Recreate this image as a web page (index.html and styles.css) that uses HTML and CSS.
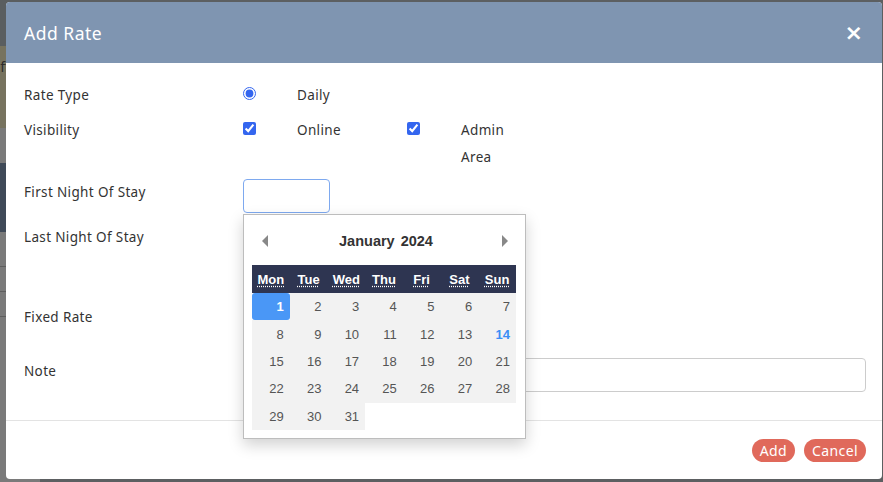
FILE: index.html
```html
<!DOCTYPE html>
<html lang="en">
<head>
    <meta charset="UTF-8">
    <meta name="viewport" content="width=device-width, initial-scale=1.0">
    <title>Add Rate</title>
    <link rel="stylesheet" href="styles.css">
</head>
<body>
    <!-- page behind the modal -->
    <div class="page">
        <div class="band band-top"></div>
        <div class="band band-olive"><span>ff</span></div>
        <div class="band band-grey"></div>
        <div class="band band-blue"></div>
        <div class="band band-rows">
            <div class="line"></div>
            <div class="line"></div>
            <div class="line"></div>
        </div>
    </div>

    <div class="modal">
        <div class="modal-header">
            <h4>Add Rate</h4>
            <button class="close" type="button">&times;</button>
        </div>

        <div class="modal-body">
            <div class="form-row row-type">
                <label class="label">Rate Type</label>
                <div class="options">
                    <div class="option">
                        <input type="radio" name="rate-type" checked>
                        <span>Daily</span>
                    </div>
                </div>
            </div>

            <div class="form-row row-visibility">
                <label class="label">Visibility</label>
                <div class="options">
                    <div class="option">
                        <input type="checkbox" checked>
                        <span>Online</span>
                    </div>
                    <div class="option">
                        <input type="checkbox" checked>
                        <span class="narrow">Admin Area</span>
                    </div>
                </div>
            </div>

            <div class="form-row row-first">
                <label class="label">First Night Of Stay</label>
                <input type="text" class="date-input focused">
            </div>

            <div class="form-row row-last">
                <label class="label">Last Night Of Stay</label>
                <input type="text" class="date-input">
            </div>

            <div class="form-row row-fixed">
                <label class="label">Fixed Rate</label>
                <input type="text" class="date-input">
            </div>

            <div class="form-row row-note">
                <label class="label">Note</label>
                <input type="text" class="note-input">
            </div>

            <div class="datepicker">
                <div class="dp-head">
                    <span class="arrow arrow-left"></span>
                    <div class="dp-title"><span>January</span><span>2024</span></div>
                    <span class="arrow arrow-right"></span>
                </div>
                <table class="dp-table">
                    <thead>
                        <tr>
                            <th><abbr title="Monday">Mon</abbr></th>
                            <th><abbr title="Tuesday">Tue</abbr></th>
                            <th><abbr title="Wednesday">Wed</abbr></th>
                            <th><abbr title="Thursday">Thu</abbr></th>
                            <th><abbr title="Friday">Fri</abbr></th>
                            <th><abbr title="Saturday">Sat</abbr></th>
                            <th><abbr title="Sunday">Sun</abbr></th>
                        </tr>
                    </thead>
                    <tbody>
                        <tr><td class="selected">1</td><td>2</td><td>3</td><td>4</td><td>5</td><td>6</td><td>7</td></tr>
                        <tr><td>8</td><td>9</td><td>10</td><td>11</td><td>12</td><td>13</td><td class="today">14</td></tr>
                        <tr><td>15</td><td>16</td><td>17</td><td>18</td><td>19</td><td>20</td><td>21</td></tr>
                        <tr><td>22</td><td>23</td><td>24</td><td>25</td><td>26</td><td>27</td><td>28</td></tr>
                        <tr><td>29</td><td>30</td><td>31</td><td class="empty"></td><td class="empty"></td><td class="empty"></td><td class="empty"></td></tr>
                    </tbody>
                </table>
            </div>
        </div>

        <div class="modal-footer">
            <button class="btn" type="button">Add</button>
            <button class="btn" type="button">Cancel</button>
        </div>
    </div>
</body>
</html>
```

FILE: styles.css
```css
body {
    margin: 0;
    background-color: #5c5f61;
    font-family: "Noto Sans", "Open Sans", sans-serif;
    color: #333;
    overflow: hidden;
    height: 482px;
}
.page {
    width: 40px;
    display: flex;
    flex-direction: column;
}
.band {
    width: 100%;
}
.band-top {
    height: 46px;
    background-color: #5a5e60;
}
.band-olive {
    height: 82px;
    background-color: #77735f;
    color: #2c2c2c;
    font-size: 14px;
    line-height: 26px;
    padding-top: 8px;
    box-sizing: border-box;
    text-align: right;
    padding-right: 30px;
}
.band-grey {
    height: 35px;
    background-color: #7a7a7a;
}
.band-blue {
    height: 69px;
    background-color: #3f4a58;
}
.band-rows {
    height: 250px;
    background-color: #7a7a7a;
    padding-top: 34px;
    box-sizing: border-box;
}
.line {
    height: 1px;
    background-color: #5e5e5e;
    margin-bottom: 24px;
}

.modal {
    position: absolute;
    top: 2px;
    left: 6px;
    width: 876px;
    height: 477px;
    background-color: white;
    border-radius: 4px;
    overflow: hidden;
    display: flex;
    flex-direction: column;
}
.modal-header {
    height: 61px;
    background-color: #7f95b1;
    display: flex;
    align-items: center;
    justify-content: space-between;
    padding: 0 18px;
    flex-shrink: 0;
}
.modal-header h4 {
    margin: 0;
    color: white;
    font-size: 17.5px;
    font-weight: 400;
    letter-spacing: 0.5px;
}
.close {
    border: none;
    background: none;
    color: white;
    font-size: 22px;
    font-weight: 700;
    padding: 0;
    line-height: 1;
    margin-right: 1px;
    font-family: "DejaVu Sans", sans-serif;
}

.modal-body {
    position: relative;
    padding: 19px 16px 28px 18px;
    border-bottom: 1px solid #e3e3e3;
    font-size: 13.5px;
    letter-spacing: 0.35px;
}
.form-row {
    display: flex;
    align-items: flex-start;
}
.label {
    width: 219px;
    line-height: 26px;
    flex-shrink: 0;
}
.options {
    display: flex;
}
.option {
    display: flex;
    align-items: flex-start;
    width: 164px;
}
.option input {
    margin: 5px 41px 0 0;
    width: 13px;
    height: 13px;
    accent-color: #3466ef;
}
.option span {
    line-height: 27px;
}
.narrow {
    width: 50px;
}
.row-type {
    margin-bottom: 9px;
}
.row-type .option span {
    line-height: 26px;
}
.row-visibility {
    margin-bottom: 8px;
}
.row-visibility .label {
    line-height: 27px;
}
.date-input {
    width: 87px;
    height: 34px;
    box-sizing: border-box;
    border: 1px solid #ccc;
    border-radius: 4px;
    margin: 0;
    font: inherit;
}
.focused {
    border-color: #7ea9ef;
    outline: none;
}
.row-first {
    margin-bottom: 11px;
}
.row-last {
    margin-bottom: 46px;
}
.row-fixed {
    margin-bottom: 20px;
}
.note-input {
    flex: 1;
    height: 34px;
    box-sizing: border-box;
    border: 1px solid #ccc;
    border-radius: 4px;
    margin: 0;
    font: inherit;
}

.datepicker {
    position: absolute;
    top: 151px;
    left: 237px;
    width: 283px;
    height: 225px;
    box-sizing: border-box;
    background-color: white;
    border: 1px solid #bdbdbd;
    box-shadow: 0 6px 14px rgba(0,0,0,0.18);
    padding: 8px 8px 0 8px;
    font-family: "Liberation Sans", Arial, sans-serif;
    letter-spacing: 0;
}
.dp-head {
    height: 36px;
    margin-bottom: 6px;
    display: flex;
    align-items: center;
    justify-content: space-between;
    padding: 0 9px 0 10px;
}
.dp-title {
    font-size: 14.5px;
    font-weight: 700;
    color: #333;
    display: flex;
    gap: 6px;
    margin-left: 2px;
}
.arrow {
    width: 0;
    height: 0;
    border-top: 6px solid transparent;
    border-bottom: 6px solid transparent;
}
.arrow-left {
    border-right: 6px solid #888;
}
.arrow-right {
    border-left: 6px solid #888;
}
.dp-table {
    width: 264px;
    border-collapse: collapse;
    table-layout: fixed;
    font-size: 13px;
}
.dp-table th {
    background-color: #2e3551;
    color: white;
    font-weight: 700;
    height: 28px;
    padding: 0;
    text-align: center;
}
.dp-table abbr {
    text-decoration: underline dotted;
    text-underline-offset: 2px;
}
.dp-table td {
    background-color: #f2f2f2;
    color: #555;
    height: 27.4px;
    padding: 0 6px 0 0;
    text-align: right;
}
.dp-table td.selected {
    background-color: #4a97f6;
    color: white;
    font-weight: 700;
    border-radius: 3px;
}
.dp-table td.today {
    color: #3a8ef6;
    font-weight: 700;
}
.dp-table td.empty {
    background-color: white;
}

.modal-footer {
    display: flex;
    justify-content: flex-end;
    gap: 9px;
    padding: 18px 16px 0 0;
}
.btn {
    background-color: #e0695b;
    color: white;
    border: none;
    border-radius: 12px;
    height: 23px;
    padding: 0 8px;
    font-family: "Noto Sans", "Open Sans", sans-serif;
    font-size: 14px;
    letter-spacing: 0.4px;
    line-height: 23px;
}
```
